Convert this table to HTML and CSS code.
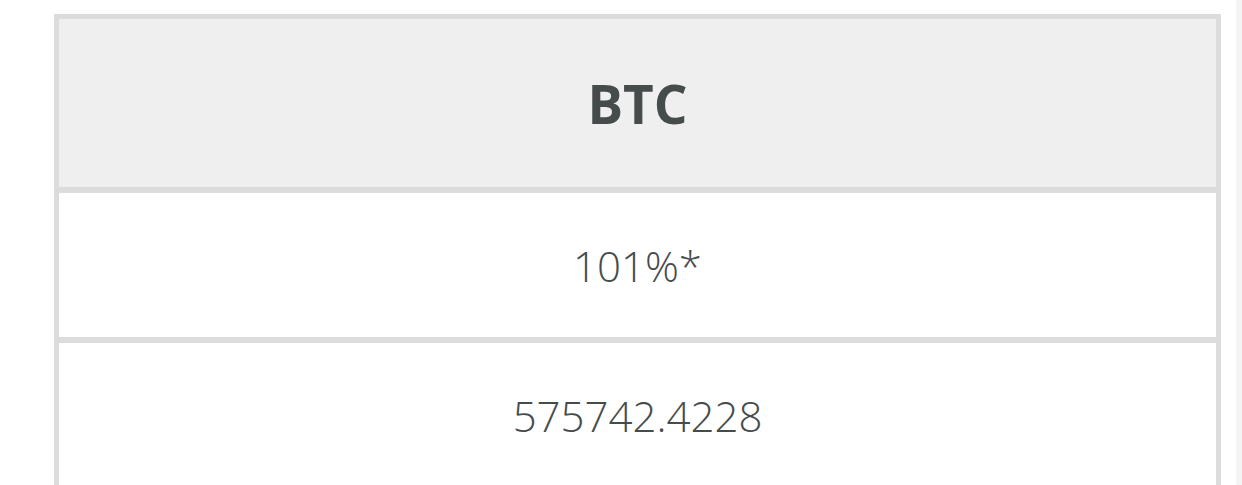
FILE: index.html
```html
<!DOCTYPE html>
<html lang="en">
<head>
<meta charset="utf-8">
<title>BTC</title>
<link rel="stylesheet" href="styles.css">
</head>
<body>
<div class="page">
  <main class="content">
    <div class="card">
      <div class="row head">BTC</div>
      <div class="row">101%*</div>
      <div class="row">575742.4228</div>
    </div>
  </main>
  <div class="rail"></div>
</div>
</body>
</html>
```
FILE: styles.css
```css
html, body {
  margin: 0;
  padding: 0;
  background: #ffffff;
}
body {
  height: 485px;
  overflow: hidden;
  font-family: "Open Sans", "Liberation Sans", sans-serif;
  color: #464c4c;
}
.page {
  display: flex;
  height: 485px;
}
.content {
  flex: 1;
  padding: 14px 15px 0 54px;
}
.rail {
  width: 6px;
  background: #f4f4f4;
}
.card {
  border: 5px solid #dcdcdc;
  border-bottom: none;
  display: flex;
  flex-direction: column;
}
.row {
  height: 144px;
  display: flex;
  align-items: center;
  justify-content: center;
  font-size: 42px;
  font-weight: 300;
  border-top: 6px solid #dcdcdc;
  background: #ffffff;
}
.row.head {
  height: 168px;
  border-top: none;
  background: #efefef;
  font-weight: 700;
  font-size: 53px;
}
```
